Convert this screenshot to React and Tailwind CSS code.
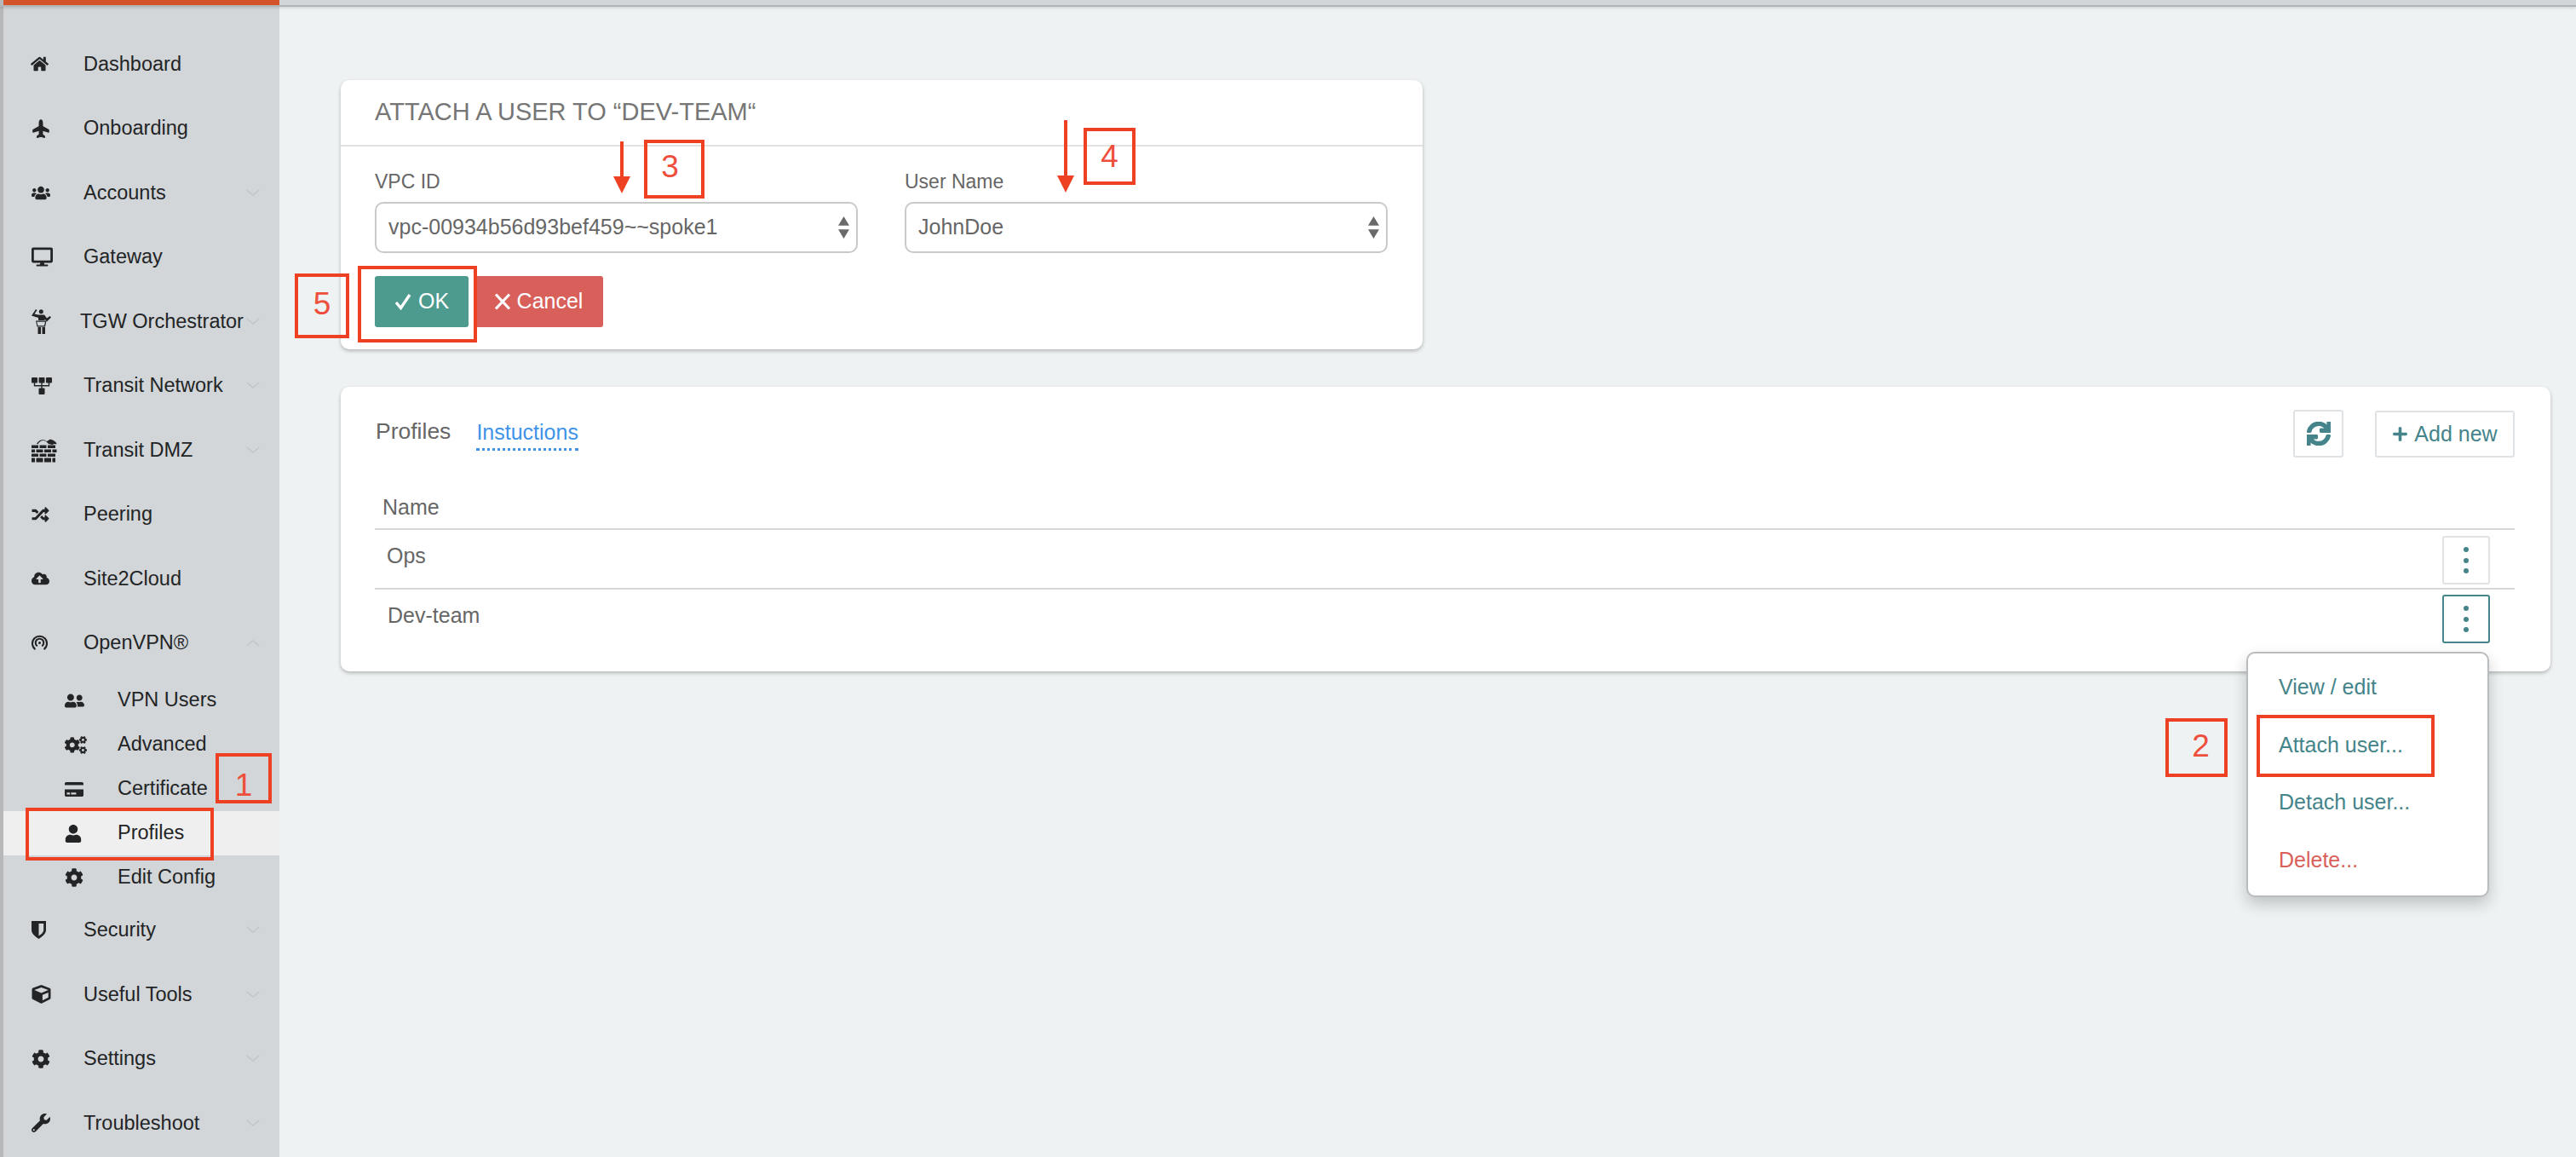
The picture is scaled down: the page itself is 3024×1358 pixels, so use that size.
import React from "react";
import {
  FaHome, FaPlane, FaUsers, FaDesktop, FaRandom, FaCloudUploadAlt, FaUserFriends, FaCogs,
  FaCreditCard, FaUser, FaCog, FaCube, FaWrench, FaPlus, FaSync,
} from "react-icons/fa";

const Teacher = (p) => (
  <svg viewBox="0 0 23 29" {...p} fill="currentColor">
    <circle cx="11.300" cy="2.800" r="2.500" />
    <path d="M5 0l1.500 1-3 4.500L8 6.500h7l3 4 3.500-2.500 1.500 1.500-5 5-2.500-3v1.500H8V10L0 7.500z" />
    <path d="M5 13.500h12.500l-1.500 7H6.500zM6.300 14.700l1.100 4.600h7.500l1.100-4.600z" fillRule="evenodd" />
    <rect x="7.500" y="21" width="3.500" height="8" />
    <rect x="12.500" y="21" width="3.500" height="8" />
  </svg>
);
const Network = (p) => (
  <svg viewBox="0 0 24 20" {...p} fill="currentColor">
    <rect x="0" y="0" width="7" height="6.500" rx="1" />
    <rect x="8.500" y="0" width="7" height="6.500" rx="1" />
    <rect x="17" y="0" width="7" height="6.500" rx="1" />
    <path d="M2.800 6h1.400v3h7.100V6h1.400v3h7.100V6h1.400v4.400h-8.500V13h-1.400v-2.600H2.800z" />
    <rect x="8.500" y="12.500" width="7" height="7.500" rx="1" />
  </svg>
);
const Wall = (p) => (
  <svg viewBox="0 0 30 28" {...p} fill="currentColor">
    <path d="M6 6C9 2 12 1 15 2l3 1.500L22 1l4 1.500 3 2.500.5 2-2.500-.5-3 1-4-1-3-3-3-1C11 2.500 9 4 7.500 7z" />
    <path d="M0 8h8v3.500H0zM9.500 8h8v3.500h-8zM19 8h9v3.500h-9zM0 13h4v3.500H0zM5.500 13h8v3.500h-8zM15 13h8v3.500h-8zM24.500 13h5v3.500h-5zM0 18h8v3.500H0zM9.500 18h8v3.500h-8zM19 18h9v3.500h-9zM0 23h4v5H0zM5.500 23h8v5h-8zM15 23h8v5h-8zM24.500 23h3.500v5h-3.500z" />
  </svg>
);
const Signal = (p) => (
  <svg viewBox="0 0 20 20" {...p} fill="none" stroke="currentColor" strokeWidth="2.200" strokeLinecap="round">
    <path d="M4 17.500A9 9 0 1 1 16 17.500" />
    <path d="M6.500 13.500A5 5 0 1 1 13.500 13.500" />
    <circle cx="10" cy="10" r="1.600" fill="currentColor" stroke="none" />
  </svg>
);
const Shield = (p) => (
  <svg viewBox="0 0 18 22" {...p} fill="currentColor">
    <path fillRule="evenodd" d="M0 0h18v11c0 5-5 8.500-9 11C5 19.500 0 16 0 11zM9 3v15.500c3-2 6-4.300 6-7.500V3z" />
  </svg>
);
const Check = (p) => (
  <svg viewBox="0 0 20 20" {...p} fill="none" stroke="currentColor" strokeWidth="3.400">
    <path d="M2 11l5.500 6.500L18 2" />
  </svg>
);
const Cross = (p) => (
  <svg viewBox="0 0 20 20" {...p} fill="none" stroke="currentColor" strokeWidth="3.200">
    <path d="M2 1.500l16 17M18 1.500l-16 17" />
  </svg>
);

const Chevron = ({ up }) => (
  <svg viewBox="0 0 18 10" className="h-[9px] w-[18px] text-[#c0c4c6]" fill="none" stroke="currentColor" strokeWidth="1.500">
    <path d={up ? "M1 9l8-7 8 7" : "M1 1l8 7 8-7"} />
  </svg>
);

const Row = ({ icon: Icon, label, cls, chevron, up, textCls = "ml-[29.500px]" }) => (
  <div className="flex h-[75.5px] items-center pl-[32.5px] pr-[22px] text-[23.5px] text-[#222426]">
    <span className="flex w-[32px] shrink-0 items-center justify-start">
      <Icon className={cls} />
    </span>
    <span className={`${textCls} flex-1 whitespace-nowrap`}>{label}</span>
    {chevron && <Chevron up={up} />}
  </div>
);

const Sub = ({ icon: Icon, label, cls, active }) => (
  <div className={`flex h-[52px] items-center pl-[72px] text-[23.5px] text-[#222426] ${active ? "bg-[#efefef]" : ""}`}>
    <span className="flex w-[32px] shrink-0 items-center">
      <Icon className={cls} />
    </span>
    <span className="ml-[30px] whitespace-nowrap">{label}</span>
  </div>
);

const Select = ({ value }) => (
  <div className="relative flex h-[60px] items-center rounded-[10px] border-2 border-[#c9c9c9] bg-white pl-[14px] text-[25px] text-[#666]">
    {value}
    <svg viewBox="0 0 12 24" className="absolute right-[8px] top-[14px] h-[28px] w-[13px] text-[#6a6a6a]" fill="currentColor">
      <path d="M6 0l6 10H0zM0 14h12L6 24z" />
    </svg>
  </div>
);

const Kebab = ({ active }) => (
  <div className={`flex h-[57px] w-[56px] flex-col items-center justify-center gap-[6.500px] rounded-[3px] border-2 bg-white ${active ? "border-[#44848a]" : "border-[#dfe3e6]"}`}>
    <i className="block h-[6px] w-[6px] rounded-full bg-[#44848a]" />
    <i className="block h-[6px] w-[6px] rounded-full bg-[#44848a]" />
    <i className="block h-[6px] w-[6px] rounded-full bg-[#44848a]" />
  </div>
);

const Mark = ({ className, digit }) => (
  <div className={`absolute flex items-center justify-center border-[4px] border-[#ee4023] text-[37px] leading-none text-[#ee4f3d] ${className}`}>
    {digit}
  </div>
);

const Arrow = ({ className, h }) => (
  <svg viewBox={`0 0 20 ${h}`} style={{ height: h }} className={`absolute w-[20px] ${className}`} fill="#ee4023">
    <path d={`M8 0h4v${h - 20}h8L10 ${h} 0 ${h - 20}h8z`} />
  </svg>
);

export default function App() {
  return (
    <div className="relative flex h-[1358px] w-[3024px] flex-col overflow-hidden bg-[#eef2f3] font-['Liberation_Sans',Arial,sans-serif]">
      <header className="relative z-10 flex h-[8px] shrink-0 border-b-2 border-[#b2b5b7] bg-[#d2d6d8] shadow-[0_2px_3px_rgba(0,0,0,0.1)]">
        <div className="w-[4px] bg-[#b7b8b9]" />
        <div className="w-[324px] bg-[#d5532a]" />
      </header>
      <div className="flex min-h-0 flex-1">
        <aside className="h-full w-[328px] shrink-0 border-l-[4px] border-[#b7b8b9] bg-[#d2d6d8]">
          <nav className="pt-[29.500px]">
            <Row icon={FaHome} label="Dashboard" cls="h-[20px] w-[21px] -ml-px" />
            <Row icon={FaPlane} label="Onboarding" cls="h-[22px] w-[22px] -rotate-90" />
            <Row icon={FaUsers} label="Accounts" cls="h-[21px] w-[22px]" chevron />
            <Row icon={FaDesktop} label="Gateway" cls="h-[25px] w-[25px]" />
            <Row icon={Teacher} label="TGW Orchestrator" cls="h-[29px] w-[23px]" textCls="ml-[25.500px]" chevron />
            <Row icon={Network} label="Transit Network" cls="h-[20px] w-[24px]" chevron />
            <Row icon={Wall} label="Transit DMZ" cls="h-[29px] w-[30px] max-w-none" chevron />
            <Row icon={FaRandom} label="Peering" cls="h-[20px] w-[21px]" />
            <Row icon={FaCloudUploadAlt} label="Site2Cloud" cls="h-[20px] w-[21px]" />
            <Row icon={Signal} label="OpenVPN®" cls="h-[19px] w-[19px]" chevron up />
            <div className="-mb-[2px] mt-[3.500px]">
              <Sub icon={FaUserFriends} label="VPN Users" cls="h-[21px] w-[23px]" />
              <Sub icon={FaCogs} label="Advanced" cls="h-[23px] w-[26px]" />
              <Sub icon={FaCreditCard} label="Certificate" cls="h-[21px] w-[22px]" />
              <Sub icon={FaUser} label="Profiles" cls="h-[21px] w-[20px]" active />
              <Sub icon={FaCog} label="Edit Config" cls="h-[22px] w-[22px]" />
            </div>
            <Row icon={Shield} label="Security" cls="h-[21px] w-[17px]" chevron />
            <Row icon={FaCube} label="Useful Tools" cls="h-[22px] w-[23px]" chevron />
            <Row icon={FaCog} label="Settings" cls="h-[22px] w-[22px]" chevron />
            <Row icon={FaWrench} label="Troubleshoot" cls="h-[22px] w-[22px]" chevron />
          </nav>
        </aside>

        <main className="flex-1 pl-[72px] pr-[30px] pt-[86px]">
          <section className="h-[316px] w-[1270px] rounded-[10px] bg-white shadow-[0_2px_4px_rgba(0,0,0,0.25)]">
            <div className="flex h-[78px] items-center border-b-2 border-[#e2e2e2] pl-[40px] text-[29px] text-[#767676]">
              ATTACH A USER TO “DEV-TEAM“
            </div>
            <div className="flex gap-[55px] px-[40px] pt-[28px]">
              <div className="w-[567px]">
                <div className="mb-[10px] h-[27px] text-[23px] leading-[27px] text-[#666]">VPC ID</div>
                <Select value="vpc-00934b56d93bef459~~spoke1" />
              </div>
              <div className="w-[567px]">
                <div className="mb-[10px] h-[27px] text-[23px] leading-[27px] text-[#666]">User Name</div>
                <Select value="JohnDoe" />
              </div>
            </div>
            <div className="flex gap-[6px] pl-[40px] pt-[27px]">
              <button className="flex h-[60px] w-[110px] items-center justify-center gap-[8px] rounded-[3px] bg-[#4d9a8e] text-[25px] text-white">
                <Check className="h-[20px] w-[20px]" />OK
              </button>
              <button className="flex h-[60px] w-[152px] items-center justify-center gap-[7px] rounded-[3px] bg-[#d95f5b] text-[25px] text-white">
                <Cross className="h-[22px] w-[20px]" />Cancel
              </button>
            </div>
          </section>

          <section className="mt-[44px] h-[334px] w-[2594px] rounded-[10px] bg-white pl-[40px] pr-[42px] shadow-[0_2px_4px_rgba(0,0,0,0.25)]">
            <div className="flex h-[83px] items-end">
              <div className="mb-[2px] flex h-[56px] flex-1 items-center pl-px">
                <span className="text-[26.500px] text-[#666]">Profiles</span>
                <span className="ml-[30px] border-b-[3px] border-dotted border-[#3f93e8] pb-[4px] pt-[7px] text-[25px] leading-[29px] text-[#3f93e8]">Instuctions</span>
              </div>
              <button className="mr-[37px] flex h-[56px] w-[59px] items-center justify-center rounded-[3px] border-2 border-[#dfe3e6] text-[#44848a]">
                <FaSync className="h-[28px] w-[28px]" stroke="currentColor" strokeWidth="28" />
              </button>
              <button className="flex h-[55px] w-[164px] items-center justify-center gap-[7px] rounded-[3px] border-2 border-[#dfe3e6] text-[25px] text-[#44848a]">
                <FaPlus className="h-[19px] w-[19px]" />Add new
              </button>
            </div>
            <div className="flex h-[85px] items-end border-b-2 border-[#d6d6d6] pb-[10px] pl-[9px] text-[25px] leading-[29px] text-[#666]">Name</div>
            <div className="flex h-[70px] items-start justify-between border-b-2 border-[#d6d6d6] pl-[14px] pr-[29px] pt-[7px] text-[25px] text-[#666]">
              <span className="pt-[5px]">Ops</span>
              <Kebab />
            </div>
            <div className="flex h-[70px] items-start justify-between pl-[15px] pr-[29px] pt-[6px] text-[25px] text-[#666]">
              <span className="pt-[6px]">Dev-team</span>
              <Kebab active />
            </div>
          </section>
        </main>
      </div>

      <div className="absolute left-[2637px] top-[765px] flex h-[288px] w-[285px] flex-col rounded-[10px] border-2 border-[#b9bcbe] bg-white pl-[36px] pt-[6px] text-[25px] text-[#44848a] shadow-[0_8px_18px_rgba(0,0,0,0.2)]">
        <div className="flex h-[67.500px] items-center">View / edit</div>
        <div className="flex h-[67.500px] items-center">Attach user...</div>
        <div className="flex h-[67.500px] items-center">Detach user...</div>
        <div className="flex h-[67.500px] items-center text-[#d95f5b]">Delete...</div>
      </div>

      <Mark className="left-[253px] top-[884px] h-[59px] w-[66px] pt-[16px]" digit="1" />
      <div className="absolute left-[30px] top-[948px] h-[62px] w-[221px] border-[4px] border-[#ee4023]" />
      <Mark className="left-[2542px] top-[843px] h-[69px] w-[73px] pb-[5px] pl-[10px]" digit="2" />
      <div className="absolute left-[2649px] top-[839px] h-[73px] w-[209px] border-[4px] border-[#ee4023]" />
      <Mark className="left-[756px] top-[164px] h-[69px] w-[71px] pb-[6px] pr-[10px]" digit="3" />
      <Arrow className="left-[720px] top-[166px]" h={61} />
      <Mark className="left-[1272px] top-[150px] h-[67px] w-[61px]" digit="4" />
      <Arrow className="left-[1241px] top-[141px]" h={85} />
      <Mark className="left-[346px] top-[321px] h-[76px] w-[64px] pb-[6px]" digit="5" />
      <div className="absolute left-[420px] top-[312px] h-[90px] w-[140px] border-[4px] border-[#ee4023]" />
    </div>
  );
}
